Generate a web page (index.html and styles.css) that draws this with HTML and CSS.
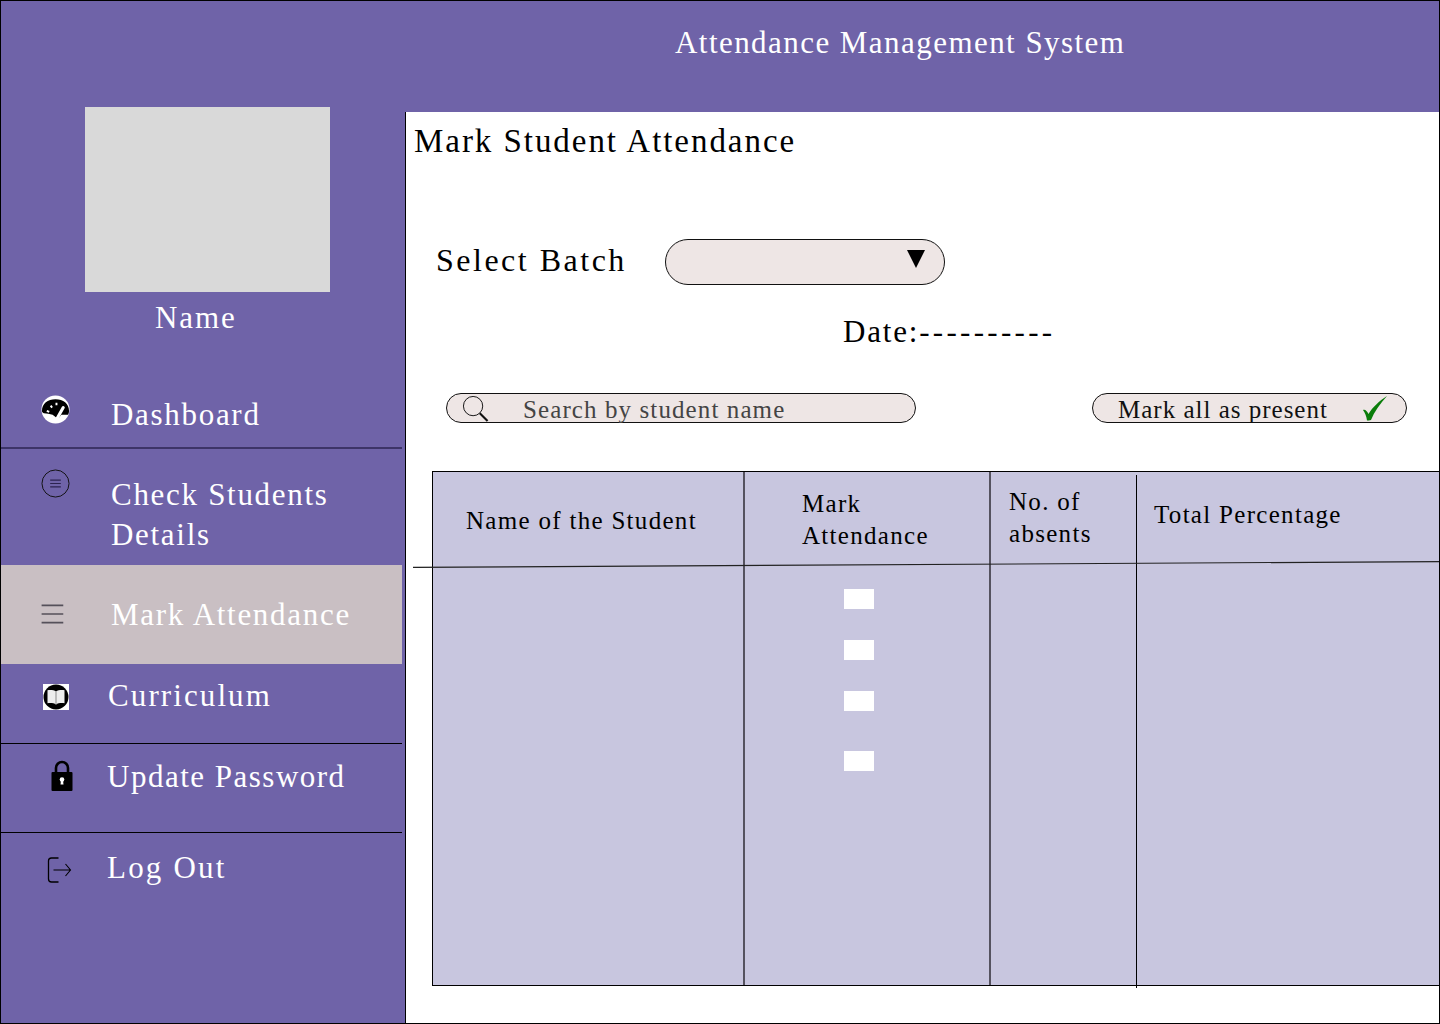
FILE: index.html
```html
<!DOCTYPE html>
<html lang="en">
<head>
    <meta charset="UTF-8">
    <title>Attendance Management System</title>
    <link rel="stylesheet" href="styles.css">
</head>
<body>
<div class="frame">

    <!-- Sidebar -->
    <aside class="sidebar">
        <div class="photo"></div>
        <div class="profile-name">Name</div>
        <nav class="nav">
            <a class="nav-item dashboard">
                <svg class="icon" viewBox="0 0 30 30"><circle cx="15" cy="15" r="14.5" fill="#fff"/><path d="M1 16.500C1 9 7 4.500 15 4.500S29 9 29 16.500c0 1.500-.3 2.800-1 4h-7l-2 2.500-3 .5-4-3c-3-.5-6-1.500-9-1.500-.6-.8-2-1-2-2.500z" fill="#000"/><path d="M16.500 24.500L23 13" stroke="#fff" stroke-width="3.200" stroke-linecap="round"/><path d="M6 16.500l2.500 1M10 11l1.500 2M16 8v2.500" stroke="#fff" stroke-width="2"/></svg>
                <span>Dashboard</span>
            </a>
            <a class="nav-item students">
                <svg class="icon" viewBox="0 0 30 30"><circle cx="15" cy="15" r="14" fill="none" stroke="#111" stroke-width="1"/><path d="M9.500 11.500h11M9.500 15h11M9.500 18.500h11" stroke="#2c2350" stroke-width="1.200"/></svg>
                <span>Check Students<br>Details</span>
            </a>
            <a class="nav-item active">
                <svg class="icon" viewBox="0 0 30 30"><path d="M3 5h25M3 15h25M3 25h25" stroke="#55505a" stroke-width="2"/></svg>
                <span>Mark Attendance</span>
            </a>
            <a class="nav-item curriculum">
                <svg class="icon" viewBox="0 0 26 26"><rect width="26" height="26" fill="#fff"/><circle cx="13" cy="13" r="12.500" fill="#000"/><path d="M13 7.500c-2-1.500-6-1.800-8.500-1.200v13c2.500-.6 6.500-.3 8.500 1.200 2-1.500 6-1.800 8.500-1.200v-13c-2.500-.6-6.500-.3-8.500 1.200z" fill="#eee"/><path d="M13 7.500v13" stroke="#888" stroke-width="1"/></svg>
                <span>Curriculum</span>
            </a>
            <a class="nav-item password">
                <svg class="icon" viewBox="0 0 22 32"><path d="M5 14V9a6 6 0 0 1 12 0v5" fill="none" stroke="#000" stroke-width="2.600"/><rect x="0.500" y="13" width="21" height="19" rx="1" fill="#000"/><circle cx="11" cy="20.500" r="2.300" fill="#fff"/><path d="M10 21h2l.5 4.500h-3z" fill="#fff"/></svg>
                <span>Update Password</span>
            </a>
            <a class="nav-item logout">
                <svg class="icon" viewBox="0 0 24 26"><path d="M11 1H4a3 3 0 0 0-3 3v18a3 3 0 0 0 3 3h7" fill="none" stroke="#000" stroke-width="1.300"/><path d="M6 13h17M18 7l5 6-5 6" fill="none" stroke="#000" stroke-width="1.100"/></svg>
                <span>Log Out</span>
            </a>
        </nav>
    </aside>

    <header class="topbar">Attendance Management System</header>

    <main class="content">
        <h1 class="page-title">Mark Student Attendance</h1>

        <div class="batch-row">
            <label class="batch-label">Select Batch</label>
            <div class="batch-select"><span class="arrow"></span></div>
        </div>

        <div class="date">Date:<span class="dashes">----------</span></div>

        <div class="tools">
            <div class="search">
                <svg class="search-icon" viewBox="0 0 28 28"><circle cx="11.500" cy="11.500" r="10" fill="none" stroke="#111" stroke-width="1"/><path d="M18.500 19l8 8" stroke="#111" stroke-width="2.200"/></svg>
                <span>Search by student name</span>
            </div>
            <div class="mark-all">
                <span>Mark all as present</span>
                <svg class="tick" viewBox="0 0 26 26"><path d="M1 15c2-1 4 1 5.500 4C10 13 17 6 25 1 18 9 12 17 9 25c-1.500.5-3 .5-4 .5C4.500 21 3 18 1 15z" fill="#0a7d0a"/></svg>
            </div>
        </div>

        <div class="table">
            <div class="cell head name-col">Name of the Student</div>
            <div class="cell head attend-col">Mark<br>Attendance</div>
            <div class="cell head absent-col">No. of<br>absents</div>
            <div class="cell head total-col">Total Percentage</div>
            <div class="cell name-col"></div>
            <div class="cell attend-col boxes">
                <div class="box"></div>
                <div class="box"></div>
                <div class="box"></div>
                <div class="box last"></div>
            </div>
            <div class="cell absent-col"></div>
            <div class="cell total-col"></div>
            <svg class="head-line" viewBox="0 0 1027 6" preserveAspectRatio="none"><path d="M0 5.500L1027 .5" stroke="#222" stroke-width="1"/></svg>
        </div>
    </main>

</div>
</body>
</html>
```

FILE: styles.css
```css
* {
    box-sizing: border-box;
}

body {
    margin: 0;
    font-family: "Liberation Serif", serif;
    background: white;
}

.frame {
    width: 1440px;
    height: 1024px;
    border: 1px solid black;
    display: grid;
    grid-template-columns: 404px 1fr;
    grid-template-rows: 111px 1fr;
    background: #6f63a8;
    overflow: hidden;
}

/* Sidebar */
.sidebar {
    grid-row: 1 / 3;
    grid-column: 1;
    color: white;
    padding-top: 106px;
}

.photo {
    width: 245px;
    height: 185px;
    margin-left: 84px;
    background: #d9d9d9;
}

.profile-name {
    margin: 9px 0 0 154px;
    font-size: 31px;
    line-height: 34px;
    letter-spacing: 1.9px;
}

.nav {
    margin-top: 44px;
    width: 401px;
}

.nav-item {
    display: flex;
    align-items: flex-start;
    font-size: 31px;
    line-height: 40px;
    letter-spacing: 1.7px;
    position: relative;
}

.nav-item .icon {
    position: absolute;
}

.dashboard {
    height: 70px;
    padding: 16px 0 0 110px;
    border-bottom: 2px solid #3d3468;
}

.dashboard .icon {
    left: 40px;
    top: 16px;
    width: 29px;
    height: 29px;
}

.students {
    height: 116px;
    padding: 26px 0 0 110px;
}

.students .icon {
    left: 40px;
    top: 20px;
    width: 29px;
    height: 29px;
}

.active {
    height: 99px;
    padding: 30px 0 0 110px;
    background: #c9bfc3;
}

.active .icon {
    left: 38px;
    top: 36px;
    width: 26px;
    height: 26px;
}

.curriculum {
    height: 80px;
    padding: 12px 0 0 107px;
    letter-spacing: 2.1px;
    border-bottom: 1px solid black;
}

.curriculum .icon {
    left: 42px;
    top: 20px;
    width: 26px;
    height: 26px;
}

.password {
    height: 89px;
    padding: 13px 0 0 106px;
    letter-spacing: 1.5px;
    border-bottom: 1px solid black;
}

.password .icon {
    left: 50px;
    top: 15px;
    width: 22px;
    height: 32px;
}

.logout {
    padding: 15px 0 0 106px;
    letter-spacing: 2.2px;
}

.logout .icon {
    left: 46px;
    top: 24px;
    width: 25px;
    height: 26px;
}

/* Header */
.topbar {
    grid-column: 2;
    grid-row: 1;
    padding: 24px 0 0 270px;
    color: white;
    font-size: 31px;
    line-height: 36px;
    letter-spacing: 1.45px;
}

/* Main content */
.content {
    grid-column: 2;
    grid-row: 2;
    background: white;
    border-left: 1px solid black;
    padding-left: 8px;
}

.page-title {
    margin: 10px 0 0;
    font-size: 33px;
    line-height: 38px;
    font-weight: normal;
    letter-spacing: 1.95px;
    color: black;
}

.batch-row {
    display: flex;
    align-items: center;
    margin: 79px 0 0 22px;
}

.batch-label {
    width: 229px;
    font-size: 32px;
    letter-spacing: 2.5px;
    margin-top: -4px;
}

.batch-select {
    width: 280px;
    height: 46px;
    background: #eee6e5;
    border: 1px solid #111;
    border-radius: 23px;
    position: relative;
}

.arrow {
    position: absolute;
    right: 19px;
    top: 10px;
    border-left: 9px solid transparent;
    border-right: 9px solid transparent;
    border-top: 18px solid black;
}

.date {
    margin: 29px 0 0 429px;
    font-size: 31px;
    line-height: 36px;
    letter-spacing: 1.8px;
}

.dashes {
    letter-spacing: 3.3px;
}

.tools {
    display: flex;
    justify-content: space-between;
    margin: 43px 32px 0 32px;
}

.search,
.mark-all {
    height: 30px;
    background: #eee6e5;
    border: 1px solid #111;
    border-radius: 15px;
    display: flex;
    align-items: center;
    padding-top: 4px;
    font-size: 25px;
    letter-spacing: 1.1px;
}

.search {
    width: 470px;
    color: #444;
    padding-left: 15px;
}

.search-icon {
    width: 27px;
    height: 27px;
    margin: -3px 34px 0 0;
    flex-shrink: 0;
}

.mark-all {
    width: 315px;
    padding-left: 25px;
    color: #111;
    letter-spacing: 1px;
}

.tick {
    width: 26px;
    height: 26px;
    margin: -4px 0 0 34px;
}

.table {
    position: relative;
    display: grid;
    grid-template-columns: 312px 246px 146px 1fr;
    grid-template-rows: 93px 1fr;
    height: 515px;
    margin: 48px -32px 0 18px;
    background: #c8c6df;
    border: 1px solid black;
    border-right: none;
    font-size: 25px;
    letter-spacing: 1.3px;
}

.name-col,
.attend-col {
    border-right: 2px solid #55525f;
}

.head {
    line-height: 32px;
}

.total-col {
    position: relative;
}

/* this divider sits a little lower than the others */
.total-col::before {
    content: "";
    position: absolute;
    left: -1px;
    top: 0;
    bottom: -3px;
    width: 1px;
    background: black;
}

.head.total-col::before {
    top: 3px;
    bottom: 0;
}

.head.name-col {
    padding: 33px 0 0 33px;
}

.head.attend-col {
    padding: 16px 0 0 57px;
}

.head.absent-col {
    padding: 14px 0 0 18px;
}

.head.total-col {
    padding: 27px 0 0 17px;
}

.boxes {
    display: flex;
    flex-direction: column;
    gap: 31px;
    padding: 24px 0 0 99px;
}

.box {
    width: 30px;
    height: 20px;
    background: white;
}

.box.last {
    margin-top: 9px;
}

.head-line {
    position: absolute;
    left: -20px;
    top: 89px;
    width: 1027px;
    height: 7px;
    overflow: visible;
}
```
